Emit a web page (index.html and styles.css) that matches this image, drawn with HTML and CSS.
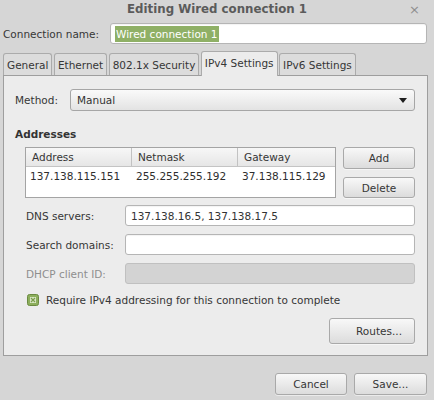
FILE: index.html
```html
<!DOCTYPE html>
<html>
<head>
<meta charset="utf-8">
<link rel="stylesheet" href="styles.css">
</head>
<body>
<div class="window">
  <header class="titlebar">
    <span></span>
    <h1>Editing Wired connection 1</h1>
    <span class="close">×</span>
  </header>

  <div class="name-row">
    <label>Connection name:</label>
    <div class="entry"><span class="sel">Wired connection 1</span></div>
  </div>

  <div class="notebook">
    <div class="tabs">
      <div class="tab">General</div>
      <div class="tab">Ethernet</div>
      <div class="tab">802.1x Security</div>
      <div class="tab active">IPv4 Settings</div>
      <div class="tab">IPv6 Settings</div>
    </div>
    <div class="panel">
      <div class="method-row">
        <label>Method:</label>
        <div class="combo"><span>Manual</span>
          <svg class="arrow" width="8" height="5" viewBox="0 0 8 5"><path d="M0 0H8L4 5Z" fill="#1e1e1e"/></svg>
        </div>
      </div>

      <h2 class="section">Addresses</h2>

      <div class="addr">
        <div class="list">
          <div class="list-head">
            <div class="cell">Address</div>
            <div class="cell">Netmask</div>
            <div class="cell last">Gateway</div>
          </div>
          <div class="list-row">
            <div class="cell">137.138.115.151</div>
            <div class="cell">255.255.255.192</div>
            <div class="cell">37.138.115.129</div>
          </div>
        </div>
        <div class="addr-buttons">
          <button class="btn add">Add</button>
          <button class="btn del">Delete</button>
        </div>
      </div>

      <div class="fields">
        <label>DNS servers:</label>
        <div class="entry"><span>137.138.16.5, 137.138.17.5</span></div>
        <label>Search domains:</label>
        <div class="entry"></div>
        <label class="disabled">DHCP client ID:</label>
        <div class="entry off"></div>
      </div>

      <div class="check-row">
        <svg class="check" width="12" height="12" viewBox="0 0 12 12">
          <rect x="0.5" y="0.5" width="11" height="11" rx="2" fill="#8cae5c" stroke="#6a8a40"/>
          <rect x="3" y="3" width="6" height="6" fill="#d8e6c4"/>
          <path d="M4 4L8 8M8 4L4 8" stroke="#7a9c4c" stroke-width="1.2"/>
        </svg>
        <span>Require IPv4 addressing for this connection to complete</span>
      </div>

      <div class="routes-row">
        <button class="btn routes">Routes...</button>
      </div>
    </div>
  </div>

  <div class="actions">
    <button class="btn cancel">Cancel</button>
    <button class="btn save">Save...</button>
  </div>
</div>
</body>
</html>
```

FILE: styles.css
```css
* { box-sizing: border-box; }
html, body { margin: 0; padding: 0; }
body {
  width: 434px;
  height: 400px;
  overflow: hidden;
  background: #d6d6d6;
  font-family: "DejaVu Sans", "Noto Sans", sans-serif;
  font-size: 10.5px;
  color: #363636;
}

.titlebar {
  height: 19px;
  display: grid;
  grid-template-columns: 1fr auto 1fr;
  align-items: center;
}
.titlebar h1 {
  margin: 0;
  font-size: 11.8px;
  font-weight: bold;
  color: #5b5b5b;
  line-height: 19px;
}
.close {
  justify-self: end;
  margin-right: 14px;
  color: #8e8e8e;
  font-size: 13px;
  line-height: 19px;
}

.name-row {
  display: flex;
  align-items: center;
  margin-top: 4px;
  padding: 0 7px 0 3px;
  height: 21px;
}
.name-row label { width: 107px; }
.name-row .entry { flex: 1; }

.entry {
  height: 21px;
  border: 1px solid #b5b5b5;
  border-radius: 3px;
  background: #fff;
  display: flex;
  align-items: center;
  padding: 0 5px;
  box-shadow: inset 0 1px 1px rgba(0,0,0,0.05);
  color: #333;
}
.name-row .entry { padding-left: 4px; }
.entry.off {
  background: #d3d3d3;
  border-color: #c0c0c0;
  box-shadow: none;
}
.sel {
  background: #8fb066;
  color: #fff;
  line-height: 16px;
  padding: 0 1px;
}

.notebook { margin: 7px 6px 0 3px; }
.tabs {
  display: flex;
  align-items: flex-end;
  height: 24px;
}
.tab {
  height: 22px;
  padding: 0 3px;
  margin-right: 1.5px;
  border: 1px solid #ababab;
  border-bottom: none;
  border-radius: 3px 3px 0 0;
  background: #dcdcdc;
  display: flex;
  align-items: center;
  color: #363636;
}
.tab.active {
  height: 25px;
  margin-bottom: -1px;
  background: #ececec;
  position: relative;
  z-index: 1;
  padding-bottom: 2px;
}

.panel {
  height: 281px;
  border: 1px solid #9e9e9e;
  background: #ececec;
  padding: 13px 12px 11px 11px;
}

.method-row {
  display: flex;
  align-items: center;
  height: 22px;
}
.method-row label { width: 55px; }
.combo {
  flex: 1;
  height: 22px;
  border: 1px solid #a6a6a6;
  border-radius: 3px;
  background: linear-gradient(#fafafa, #e3e3e3);
  display: flex;
  align-items: center;
  justify-content: space-between;
  padding: 0 7px 0 6px;
  color: #333;
}

.section {
  margin: 15px 0 0 0;
  font-size: 10.5px;
  font-weight: bold;
  line-height: 16px;
  color: #333;
}

.addr {
  display: flex;
  gap: 7px;
  margin: 5px 0 0 10px;
}
.list {
  width: 311px;
  height: 51px;
  border: 1px solid #a4a4a4;
  background: #fff;
}
.list-head, .list-row {
  display: grid;
  grid-template-columns: 106px 106px 1fr;
}
.list-head {
  height: 19px;
  background: linear-gradient(#f7f7f7, #e6e6e6);
  border-bottom: 1px solid #c4c4c4;
}
.list-head .cell {
  border-right: 1px solid #c2c2c2;
  line-height: 18px;
  padding-left: 6px;
}
.list-head .cell.last { border-right: none; }
.list-row .cell {
  line-height: 19px;
  padding-left: 4px;
  color: #2e2e2e;
}

.addr-buttons {
  display: flex;
  flex-direction: column;
  gap: 8px;
}
.btn {
  font-family: inherit;
  font-size: 10.5px;
  color: #363636;
  border: 1px solid #a9a9a9;
  border-radius: 3px;
  background: linear-gradient(#f8f8f8, #dcdcdc);
  box-shadow: 0 1px 0 rgba(255,255,255,0.5);
  padding: 0;
  margin: 0;
}
.add { width: 72px; height: 22px; }
.del { width: 72px; height: 21px; }

.fields {
  display: grid;
  grid-template-columns: 99px 1fr;
  row-gap: 8px;
  margin: 7px 0 0 11px;
  align-items: center;
}
.fields .entry { height: 21px; }
.disabled { color: #8e8e8e; }

.check-row {
  display: flex;
  align-items: center;
  gap: 7px;
  height: 16px;
  margin: 8px 0 0 12px;
}
.check { flex: none; }

.routes-row {
  display: flex;
  justify-content: flex-end;
  margin-top: 10px;
}
.routes {
  width: 86px;
  height: 26px;
  padding-left: 14px;
}

.actions {
  display: flex;
  justify-content: flex-end;
  gap: 7px;
  margin-top: 17px;
  padding-right: 7px;
}
.cancel { width: 72px; height: 22px; }
.save { width: 73px; height: 22px; }
```
